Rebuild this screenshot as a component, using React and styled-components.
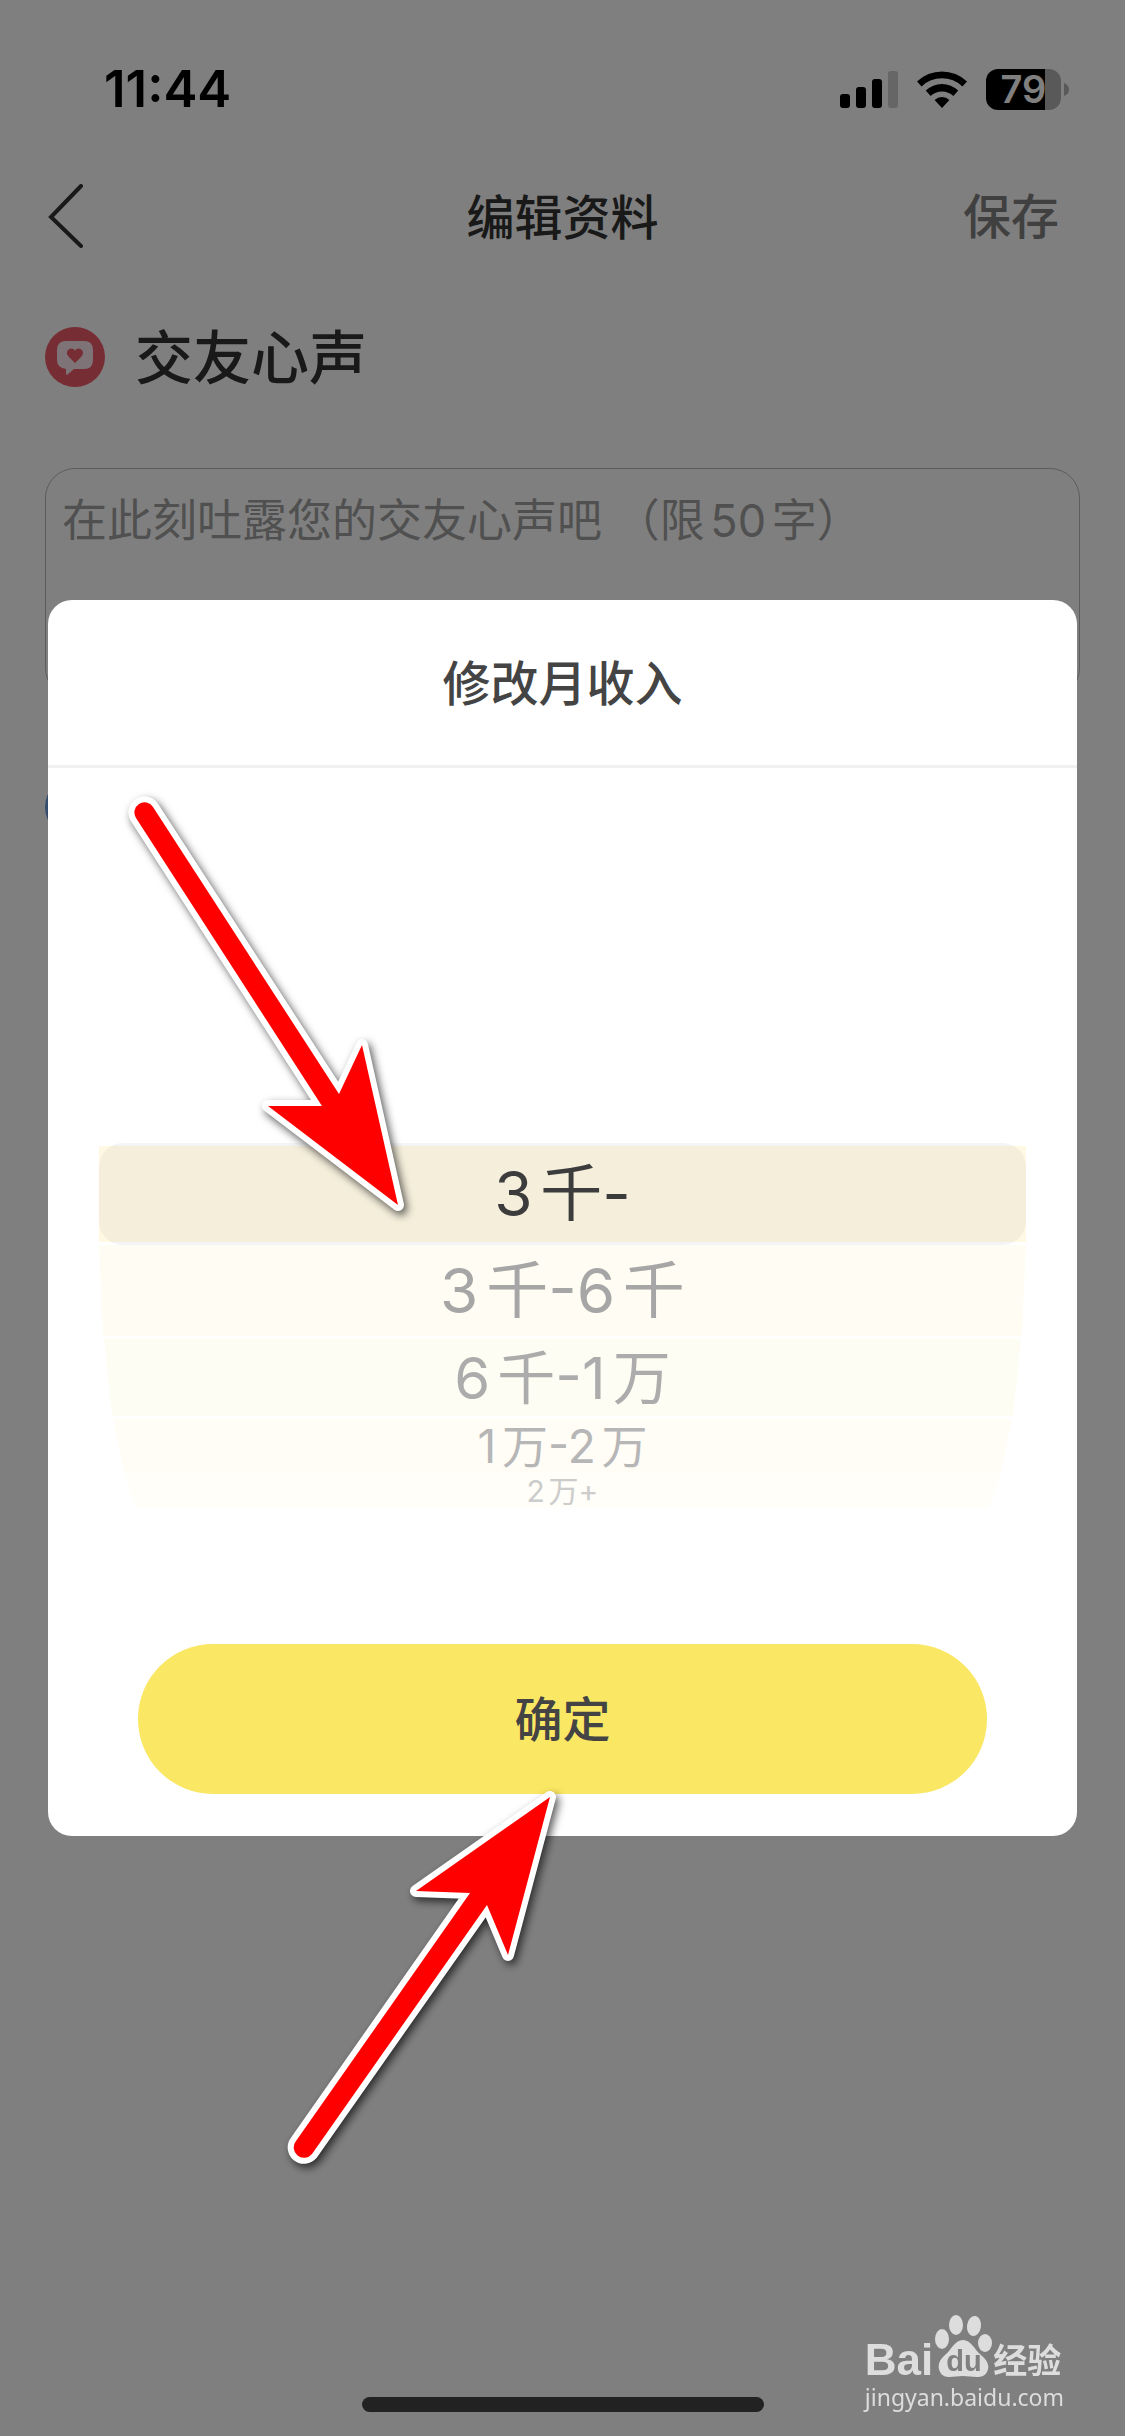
import React, { useState } from "react";
import styled, { createGlobalStyle } from "styled-components";

const incomes = [
  { id: "a", text: "3千-", height: 96, gap: 3, size: 62, color: "#383838", bg: "#fff9e3", from: 0, to: 0 },
  { id: "b", text: "3千-6千", height: 91, gap: 3, size: 62, color: "#a6a6a6", bg: "#fffdf3", from: 0, to: 4 },
  { id: "c", text: "6千-1万", height: 77, gap: 3, size: 58, color: "#acacac", bg: "#fefdf3", from: 5, to: 13 },
  { id: "d", text: "1万-2万", height: 54, gap: 1, size: 46, color: "#b6b6b6", bg: "#fffdf6", from: 14, to: 25 },
  { id: "e", text: "2万+", height: 34, gap: 0, size: 30, color: "#cccccc", bg: "#fffef8", from: 25, to: 37 },
];

export default function App() {
  const [income, setIncome] = useState("a");
  const [words, setWords] = useState("");

  return (
    <>
      <GlobalStyle />
      <Page>
        <StatusBar>
          <Time>11:44</Time>
          <StatusIcons>
            <Signal />
            <Wifi />
            <Battery level={79} />
          </StatusIcons>
        </StatusBar>

        <NavBar>
          <BackButton type="button" aria-label="返回">
            <svg width="36" height="64" viewBox="0 0 36 64">
              <path d="M33 2 L3 33 L33 62" fill="none" stroke="#333" strokeWidth="4" strokeLinecap="round" />
            </svg>
          </BackButton>
          <NavTitle>编辑资料</NavTitle>
          <SaveButton type="button">保存</SaveButton>
        </NavBar>

        <Section>
          <SectionHead>
            <HeartIcon />
            <SectionTitle htmlFor="words">交友心声</SectionTitle>
          </SectionHead>
          <Words
            id="words"
            value={words}
            onChange={(e) => setWords(e.target.value)}
            placeholder="在此刻吐露您的交友心声吧 （限50字）"
          />
        </Section>
        <Section>
          <SectionHead>
            <BlueDot />
          </SectionHead>
        </Section>

        <HomeIndicator />
      </Page>

      <Overlay>
        <Modal role="dialog" aria-labelledby="modal-title">
          <ModalTitle id="modal-title">修改月收入</ModalTitle>
          <Picker role="radiogroup" aria-labelledby="modal-title">
            {incomes.map((item) => (
              <Option key={item.id} $item={item}>
                <input
                  type="radio"
                  name="income"
                  checked={income === item.id}
                  onChange={() => setIncome(item.id)}
                />
                {item.text}
              </Option>
            ))}
            <Indicator />
          </Picker>
          <ConfirmButton type="button">确定</ConfirmButton>
        </Modal>
      </Overlay>

      <Arrows />
      <Watermark />
    </>
  );
}

function Signal() {
  return (
    <svg width="58" height="38" viewBox="0 0 58 38">
      <rect x="0" y="24" width="10" height="14" rx="3" />
      <rect x="16" y="17" width="10" height="21" rx="3" />
      <rect x="32" y="9" width="10" height="29" rx="3" />
      <rect x="48" y="1" width="10" height="37" rx="3" fill="#cccccc" />
    </svg>
  );
}

function Wifi() {
  return (
    <svg width="52" height="38" viewBox="0 0 52 38">
      <path d="M1 11.5 A36 36 0 0 1 51 11.5 L46.4 16.4 A29.5 29.5 0 0 0 5.6 16.4 Z" />
      <path d="M9.8 20.6 A23 23 0 0 1 42.2 20.6 L37.4 26 A16.5 16.5 0 0 0 14.6 26 Z" />
      <path d="M18.6 30 A10.5 10.5 0 0 1 33.4 30 L26 38 Z" />
    </svg>
  );
}

function Battery({ level }) {
  return (
    <BatteryWrap>
      <BatteryBody>{level}</BatteryBody>
      <svg width="5" height="13" viewBox="0 0 5 13">
        <path d="M0 0 Q5 2 5 6.5 Q5 11 0 13 Z" fill="#b2b2b2" />
      </svg>
    </BatteryWrap>
  );
}

function HeartIcon() {
  return (
    <svg width="60" height="60" viewBox="0 0 60 60">
      <circle cx="30" cy="30" r="30" fill="#ed5a68" />
      <path
        d="M21 14 H39 Q48 14 48 23 V33 Q48 42 39 42 H29 L22 48 Q21 48 21 46 V42 Q12 41 12 33 V23 Q12 14 21 14 Z"
        fill="#fce9f0"
      />
      <path
        d="M30 36 L23.5 29.5 C20 25.5 23 21.5 26.5 21.5 C28.5 21.5 29.5 22.5 30 24 C30.5 22.5 31.5 21.5 33.5 21.5 C37 21.5 40 25.5 36.5 29.5 Z"
        fill="#ed5a68"
      />
    </svg>
  );
}

function Arrows() {
  return (
    <ArrowLayer viewBox="0 0 1125 2436" aria-hidden="true">
      <g fill="#ff0000" stroke="#ffffff" strokeWidth="12" strokeLinejoin="round" paintOrder="stroke">
        <path d="M153 807 A10 10 0 0 0 136 818 L322 1106 L268 1106 L398 1205 L362 1045 L339 1094 Z" />
        <path d="M296 2141 A10 10 0 0 0 312 2154 L487 1905 L508 1955 L550 1797 L416 1891 L470 1893 Z" />
      </g>
    </ArrowLayer>
  );
}

function Watermark() {
  return (
    <WatermarkBox>
      <WatermarkLogo>
        <Latin>Bai</Latin>
        <svg width="60" height="64" viewBox="0 0 60 64">
          <ellipse cx="9" cy="25" rx="7" ry="10" />
          <ellipse cx="23" cy="11" rx="7" ry="10" />
          <ellipse cx="41" cy="12" rx="7" ry="10" transform="rotate(8 41 12)" />
          <ellipse cx="52" cy="29" rx="7" ry="9" />
          <path d="M30 26 C38 26 41 35 48 41 C55 47 57 52 54 58 C50 66 39 62 30 62 C21 62 11 66 7 58 C4 52 6 46 12 41 C19 35 22 26 30 26 Z" />
          <text x="31" y="57" textAnchor="middle">du</text>
        </svg>
        <Hanzi>经验</Hanzi>
      </WatermarkLogo>
      <WatermarkUrl>jingyan.baidu.com</WatermarkUrl>
    </WatermarkBox>
  );
}

const GlobalStyle = createGlobalStyle`
  * {
    box-sizing: border-box;
  }

  body {
    margin: 0;
    background: #ffffff;
    font-family: Inter, "Noto Sans CJK SC", sans-serif;
    text-autospace: normal;
  }

  button {
    border: 0;
    padding: 0;
    background: none;
    font-family: inherit;
    cursor: pointer;
  }

  svg {
    display: block;
  }
`;

const Page = styled.div`
  display: flex;
  flex-direction: column;
  min-height: 100vh;
  background: #ffffff;
`;

const StatusBar = styled.header`
  display: flex;
  align-items: center;
  justify-content: space-between;
  height: 132px;
  padding: 46px 56px 0 104px;
  margin-bottom: 24px;
`;

const Time = styled.span`
  font-size: 51px;
  font-weight: 600;
  line-height: 60px;
  color: #000000;
`;

const StatusIcons = styled.div`
  display: flex;
  align-items: center;
  gap: 18px;
`;

const BatteryWrap = styled.div`
  display: flex;
  align-items: center;
  gap: 3px;
`;

const BatteryBody = styled.span`
  display: flex;
  align-items: center;
  justify-content: center;
  width: 75px;
  height: 41px;
  border-radius: 12px;
  background: linear-gradient(to right, #000000 79%, #b2b2b2 79%);
  color: #ffffff;
  font-size: 38px;
  font-weight: 600;
`;

const NavBar = styled.nav`
  display: grid;
  grid-template-columns: 1fr auto 1fr;
  align-items: center;
  height: 120px;
  padding: 0 48px;
`;

const BackButton = styled.button`
  justify-self: start;
`;

const NavTitle = styled.h1`
  margin: 0;
  padding-top: 4px;
  font-size: 48px;
  font-weight: 500;
  line-height: 72px;
  color: #333333;
`;

const SaveButton = styled.button`
  justify-self: end;
  padding: 2px 18px 0 0;
  font-size: 48px;
  font-weight: 500;
  line-height: 72px;
  color: #808080;
`;

const Section = styled.section`
  padding: 51px 45px 0;
`;

const SectionHead = styled.div`
  display: flex;
  align-items: center;
  gap: 30px;
  height: 60px;
  margin-bottom: 81px;
`;

const SectionTitle = styled.label`
  padding-bottom: 6px;
  font-size: 58px;
  font-weight: 500;
  color: #333333;
`;

const Words = styled.textarea`
  display: block;
  width: 100%;
  height: 230px;
  margin-bottom: 28px;
  padding: 18px 16px;
  border: 1px solid #b8b8b8;
  border-radius: 30px;
  background: none;
  resize: none;
  font-family: inherit;
  font-size: 45px;
  line-height: 68px;
  color: #333333;

  &::placeholder {
    color: #a0a0a0;
    opacity: 1;
  }
`;

const BlueDot = styled.span`
  width: 60px;
  height: 60px;
  border-radius: 50%;
  background: #6a9bdc;
`;

const HomeIndicator = styled.div`
  width: 402px;
  height: 15px;
  margin: auto auto 24px;
  border-radius: 8px;
  background: #444444;
`;

const Overlay = styled.div`
  position: fixed;
  inset: 0;
  display: flex;
  align-items: center;
  padding: 0 48px;
  background: rgba(0, 0, 0, 0.5);
`;

const Modal = styled.div`
  display: flex;
  flex-direction: column;
  width: 100%;
  padding-bottom: 42px;
  border-radius: 24px;
  background: #ffffff;
`;

const ModalTitle = styled.h2`
  margin: 0;
  padding: 47px 0 45px;
  border-bottom: 3px solid #f0f0f0;
  font-size: 48px;
  font-weight: 500;
  line-height: 73px;
  text-align: center;
  color: #444444;
`;

const Picker = styled.div`
  position: relative;
  display: flex;
  flex-direction: column;
  margin: 0 51px;
  padding: 378px 0 136px;
`;

// each row further down the wheel narrows towards its lower edge
const Option = styled.label`
  display: flex;
  align-items: center;
  justify-content: center;
  height: ${({ $item }) => $item.height}px;
  margin-bottom: ${({ $item }) => $item.gap}px;
  background: ${({ $item }) => $item.bg};
  clip-path: polygon(
    ${({ $item }) => $item.from}px 0,
    calc(100% - ${({ $item }) => $item.from}px) 0,
    calc(100% - ${({ $item }) => $item.to}px) 100%,
    ${({ $item }) => $item.to}px 100%
  );
  font-size: ${({ $item }) => $item.size}px;
  line-height: 1;
  color: ${({ $item }) => $item.color};
  cursor: pointer;

  input {
    position: absolute;
    opacity: 0;
  }
`;

const Indicator = styled.div`
  position: absolute;
  top: 375px;
  left: 0;
  right: 0;
  height: 102px;
  border-radius: 24px;
  background: rgba(116, 116, 128, 0.08);
  pointer-events: none;
`;

const ConfirmButton = styled.button`
  height: 150px;
  margin: 0 90px;
  padding-bottom: 6px;
  border-radius: 75px;
  background: #fae763;
  font-size: 48px;
  font-weight: 500;
  color: #444444;
`;

const ArrowLayer = styled.svg`
  position: fixed;
  top: 0;
  left: 0;
  width: 100%;
  pointer-events: none;
  filter: drop-shadow(3px 4px 4px rgba(0, 0, 0, 0.65));
`;

const WatermarkBox = styled.div`
  position: fixed;
  right: 61px;
  bottom: 20px;
  color: #dddddd;
`;

const WatermarkLogo = styled.div`
  display: flex;
  align-items: flex-end;

  svg {
    fill: #dddddd;
  }

  text {
    fill: #808080;
    font: bold 29px "Liberation Sans", sans-serif;
  }
`;

const Latin = styled.span`
  font-family: "Liberation Sans", sans-serif;
  font-size: 44px;
  font-weight: 700;
  line-height: 36px;
`;

const Hanzi = styled.span`
  font-size: 34px;
  font-weight: 700;
  line-height: 34px;
`;

const WatermarkUrl = styled.div`
  font-family: "Noto Sans", sans-serif;
  font-size: 23px;
  line-height: 38px;
  text-align: right;
`;
